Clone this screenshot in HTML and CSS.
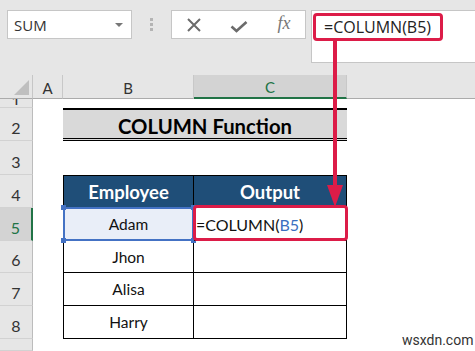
FILE: index.html
```html
<!DOCTYPE html>
<html lang="en">
<head>
  <meta charset="UTF-8" />
  <title>COLUMN Function</title>
  <link rel="stylesheet" href="styles.css">
</head>
<body>
  <div class="toolbar">
    <div class="namebox">
      <span>SUM</span>
      <span class="caret"></span>
    </div>
    <div class="grip"><i></i><i></i><i></i></div>
    <div class="fx-buttons">
      <svg width="16" height="16" viewBox="0 0 16 16">
        <path d="M2 2 L14 14 M14 2 L2 14" stroke="#6b6b6b" stroke-width="2" fill="none"/>
      </svg>
      <svg width="18" height="12" viewBox="0 0 18 12">
        <path d="M1.5 5.5 L6.5 10 L16.5 1" stroke="#6b6b6b" stroke-width="2.6" fill="none"/>
      </svg>
      <span class="fx">fx</span>
    </div>
    <div class="formula">
      <span class="formula-text">=COLUMN(B5)</span>
    </div>
  </div>

  <div class="sheet">
    <!-- column headers -->
    <div class="corner"><span class="tri"></span></div>
    <div class="ch">A</div>
    <div class="ch">B</div>
    <div class="ch active">C</div>
    <div class="ch-rest"></div>

    <!-- row 1 (scrolled, only its foot shows) -->
    <div class="rh"><span class="peek">1</span></div>
    <div></div><div></div><div></div><div></div>

    <!-- row 2 -->
    <div class="rh">2</div>
    <div></div>
    <div class="title">COLUMN Function</div>
    <div></div>

    <!-- row 3 -->
    <div class="rh">3</div>
    <div></div><div></div><div></div><div></div>

    <!-- row 4 -->
    <div class="rh">4</div>
    <div></div>
    <div class="th col-b">Employee</div>
    <div class="th">Output</div>
    <div></div>

    <!-- row 5 -->
    <div class="rh active">5</div>
    <div></div>
    <div class="td col-b selected">
      Adam
      <i class="handle tl"></i><i class="handle tr"></i>
      <i class="handle bl"></i><i class="handle br"></i>
    </div>
    <div class="td editing">=COLUMN(<span class="ref">B5</span>)</div>
    <div></div>

    <!-- row 6 -->
    <div class="rh">6</div>
    <div></div>
    <div class="td col-b">Jhon</div>
    <div class="td"></div>
    <div></div>

    <!-- row 7 -->
    <div class="rh">7</div>
    <div></div>
    <div class="td col-b">Alisa</div>
    <div class="td"></div>
    <div></div>

    <!-- row 8 -->
    <div class="rh">8</div>
    <div></div>
    <div class="td col-b">Harry</div>
    <div class="td"></div>
    <div></div>

    <!-- row 9 (cut off) -->
    <div class="rh"></div>
    <div></div><div></div><div></div><div></div>
  </div>

  <svg class="arrow" width="475" height="351" viewBox="0 0 475 351">
    <rect x="333" y="41" width="4" height="150" fill="#dc1c48"/>
    <polygon points="327,185 343,185 335,207" fill="#dc1c48"/>
  </svg>

  <div class="watermark">wsxdn.com</div>
</body>
</html>
```

FILE: styles.css
```css
body {
  margin: 0;
  width: 475px;
  height: 351px;
  overflow: hidden;
  position: relative;
  background: #ffffff;
  font-family: Lato, "Open Sans", sans-serif;
  color: #111;
}

/* formula bar */

.toolbar {
  height: 75px;
  box-sizing: border-box;
  padding: 10px 0 0 7px;
  background: #e6e6e6;
  display: flex;
  align-items: flex-start;
}

.namebox {
  width: 125px;
  height: 29px;
  box-sizing: border-box;
  background: #fff;
  border: 1px solid #c6c6c6;
  display: flex;
  align-items: center;
  justify-content: space-between;
  padding: 0 8px 0 6px;
  font-family: "Open Sans", sans-serif;
  font-size: 15px;
  color: #333;
}

.caret {
  width: 0;
  height: 0;
  border-left: 4px solid transparent;
  border-right: 4px solid transparent;
  border-top: 4px solid #777;
}

.grip {
  width: 39px;
  height: 29px;
  display: flex;
  flex-direction: column;
  align-items: center;
  justify-content: center;
  gap: 2px;
}

.grip i {
  width: 3px;
  height: 3px;
  background: #b4b4b4;
}

.fx-buttons {
  width: 135px;
  height: 29px;
  box-sizing: border-box;
  background: #fff;
  border: 1px solid #c6c6c6;
  margin-right: 5px;
  display: grid;
  grid-template-columns: 44px 46px 44px;
  align-items: center;
  justify-items: center;
}

.fx-buttons svg:nth-child(2) {
  margin-top: 5px;
}

.fx {
  font-family: "Liberation Serif", serif;
  font-style: italic;
  font-size: 18px;
  color: #777;
  margin-top: -2px;
}

.formula {
  flex: 1;
  height: 53px;
  box-sizing: border-box;
  background: #fff;
  border: 1px solid #c6c6c6;
  border-right: none;
  padding: 2px 0 0 1px;
}

.formula-text {
  display: inline-block;
  box-sizing: border-box;
  width: 130px;
  height: 28px;
  padding-left: 8px;
  border: 3px solid #dc1c48;
  border-radius: 4px;
  font-family: "Open Sans", sans-serif;
  font-size: 16px;
  line-height: 22px;
  color: #222;
}

/* sheet */

.sheet {
  display: grid;
  grid-template-columns: 33px 30px 131px 153px 1fr;
  grid-template-rows: 24px 9px 33px 34px 33px 33px 32px 33px 33px 1fr;
  height: 276px;
}

.sheet > div {
  box-sizing: border-box;
}

.corner {
  background: #e6e6e6;
  border-right: 1px solid #c6c6c6;
  border-bottom: 1px solid #ababab;
  position: relative;
}

.tri {
  position: absolute;
  right: 3px;
  bottom: 3px;
  width: 0;
  height: 0;
  border-left: 15px solid transparent;
  border-bottom: 15px solid #bfbfbf;
}

.ch {
  background: #e6e6e6;
  border-right: 1px solid #c8c8c8;
  border-bottom: 1px solid #ababab;
  display: flex;
  align-items: center;
  justify-content: center;
  padding-top: 2px;
  font-size: 15px;
  color: #333;
}

.ch.active {
  background: #d3d3d3;
  color: #217346;
  border-bottom: 2px solid #217346;
}

.ch-rest {
  background: #e6e6e6;
  border-bottom: 1px solid #ababab;
}

.rh {
  background: #e6e6e6;
  border-right: 1px solid #bcbcbc;
  border-bottom: 1px solid #d2d2d2;
  display: flex;
  align-items: flex-end;
  justify-content: center;
  overflow: hidden;
  padding-bottom: 2px;
  font-size: 16px;
  line-height: 20px;
  color: #333;
}

.rh .peek {
  line-height: 9px;
  height: 7px;
  overflow: hidden;
  display: flex;
  align-items: flex-end;
}

.rh.active {
  background: #d3d3d3;
  color: #217346;
  border-right: 2px solid #217346;
}

.title {
  grid-column: span 2;
  background: #d9d9d9;
  border-top: 2px solid #000;
  border-bottom: 3px double #000;
  display: flex;
  align-items: center;
  justify-content: center;
  padding-top: 3px;
  font-weight: 700;
  font-size: 20.3px;
  color: #000;
}

.th,
.td {
  border-right: 1px solid #000;
  border-bottom: 1px solid #000;
  display: flex;
  align-items: center;
  justify-content: center;
}

.col-b {
  border-left: 1px solid #000;
}

.th {
  background: #1f4e78;
  border-top: 1px solid #000;
  color: #fff;
  font-weight: 700;
  font-size: 18.5px;
}

.td {
  font-size: 15.5px;
  color: #111;
}

.selected {
  position: relative;
  background: #e9eef8;
  border: 2px solid #4472c4;
  margin-top: -1px;
}

.handle {
  position: absolute;
  width: 5px;
  height: 5px;
  background: #4472c4;
}

.handle.tl { left: -4px; top: -4px; }
.handle.tr { right: -4px; top: -4px; }
.handle.bl { left: -4px; bottom: -4px; }
.handle.br { right: -4px; bottom: -4px; }

.editing {
  position: relative;
  justify-content: flex-start;
  padding-left: 2px;
  font-size: 16px;
}

.editing::after {
  content: "";
  position: absolute;
  inset: -3px -2px -1px -1px;
  border: 3px solid #dc1c48;
  border-radius: 4px;
}

.ref {
  color: #3a6fc0;
}

/* annotation overlay */

.arrow {
  position: absolute;
  left: 0;
  top: 0;
  pointer-events: none;
}

.watermark {
  position: absolute;
  left: 402px;
  top: 332px;
  font-family: Roboto, sans-serif;
  font-size: 14px;
  color: #333;
}
```
